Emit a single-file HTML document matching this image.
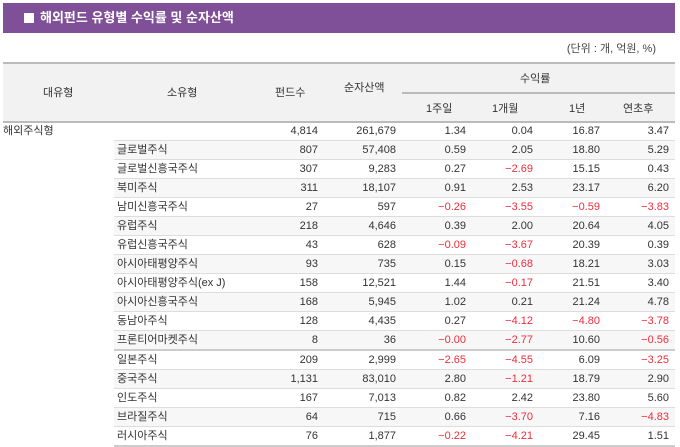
<!DOCTYPE html>
<html><head><meta charset="utf-8"><style>
body{margin:0;width:680px;height:446px;background:#fff;font-family:"Liberation Sans","Noto Sans CJK KR",sans-serif;font-size:11px;color:#333;position:relative;overflow:hidden}
.title{position:absolute;left:3px;top:3px;width:672px;height:30px;background:#7f4f97;color:#fff;font-size:13px;font-weight:bold;line-height:30px}
.title span{display:inline-block;width:10px;height:10px;background:#fff;margin:0 6px 0 21px;vertical-align:-1px}
.unit{position:absolute;right:24px;top:40px;font-size:11px;color:#444}
.hdr{position:absolute;left:3px;top:62px;width:672px;height:57px;background:#f2f2f2;border-top:2px solid #bbb;border-bottom:2px solid #bbb}
.h{position:absolute;font-size:11px}
table{position:absolute;left:3px;top:122px;width:672px;border-collapse:collapse}
td{height:18px;padding:0;line-height:18px;white-space:nowrap}
tr.first td{height:18px}
td.n{text-align:right}
.r{color:#ee2d3b}
tr.g td.s,tr.g td.n{background:#f7f7f7}
tr td.s,tr td.n{border-top:1px solid #ddd}
tr.first td{border-top:none}
tr.thick td{height:17px}
tr.thick td.s,tr.thick td.n{border-top:2px solid #ccc}
tr.last td.s,tr.last td.n{border-bottom:2px solid #ccc}
</style></head><body>
<div class="title"><span></span>해외펀드 유형별 수익률 및 순자산액</div>
<div class="unit">(단위 : 개, 억원, %)</div>
<div class="hdr">
<div class="h" style="left:40px;top:20px">대유형</div>
<div class="h" style="left:164px;top:20px">소유형</div>
<div class="h" style="left:272px;top:20px">펀드수</div>
<div class="h" style="left:341px;top:15px">순자산액</div>
<div class="h" style="left:517px;top:6px">수익률</div>
<div style="position:absolute;left:399px;top:28px;width:273px;height:2px;background:#bbb"></div>
<div class="h" style="left:423px;top:36px">1주일</div>
<div class="h" style="left:489px;top:36px">1개월</div>
<div class="h" style="left:566px;top:36px">1년</div>
<div class="h" style="left:620px;top:36px">연초후</div>
</div>
<table>
<colgroup><col style="width:111px"><col style="width:150px"><col style="width:54px"><col style="width:78px"><col style="width:70px"><col style="width:67px"><col style="width:67px"><col style="width:75px"></colgroup>
<tr class="first"><td>해외주식형</td><td class="s"></td><td class="n">4,814</td><td class="n">261,679</td><td class="n">1.34</td><td class="n">0.04</td><td class="n">16.87</td><td class="n" style="padding-right:6px">3.47</td></tr>
<tr class="g"><td></td><td class="s" style="padding-left:3px">글로벌주식</td><td class="n">807</td><td class="n">57,408</td><td class="n">0.59</td><td class="n">2.05</td><td class="n">18.80</td><td class="n" style="padding-right:6px">5.29</td></tr>
<tr><td></td><td class="s" style="padding-left:3px">글로벌신흥국주식</td><td class="n">307</td><td class="n">9,283</td><td class="n">0.27</td><td class="n r">−2.69</td><td class="n">15.15</td><td class="n" style="padding-right:6px">0.43</td></tr>
<tr class="g"><td></td><td class="s" style="padding-left:3px">북미주식</td><td class="n">311</td><td class="n">18,107</td><td class="n">0.91</td><td class="n">2.53</td><td class="n">23.17</td><td class="n" style="padding-right:6px">6.20</td></tr>
<tr><td></td><td class="s" style="padding-left:3px">남미신흥국주식</td><td class="n">27</td><td class="n">597</td><td class="n r">−0.26</td><td class="n r">−3.55</td><td class="n r">−0.59</td><td class="n r" style="padding-right:6px">−3.83</td></tr>
<tr class="g"><td></td><td class="s" style="padding-left:3px">유럽주식</td><td class="n">218</td><td class="n">4,646</td><td class="n">0.39</td><td class="n">2.00</td><td class="n">20.64</td><td class="n" style="padding-right:6px">4.05</td></tr>
<tr><td></td><td class="s" style="padding-left:3px">유럽신흥국주식</td><td class="n">43</td><td class="n">628</td><td class="n r">−0.09</td><td class="n r">−3.67</td><td class="n">20.39</td><td class="n" style="padding-right:6px">0.39</td></tr>
<tr class="g"><td></td><td class="s" style="padding-left:3px">아시아태평양주식</td><td class="n">93</td><td class="n">735</td><td class="n">0.15</td><td class="n r">−0.68</td><td class="n">18.21</td><td class="n" style="padding-right:6px">3.03</td></tr>
<tr><td></td><td class="s" style="padding-left:3px">아시아태평양주식(ex J)</td><td class="n">158</td><td class="n">12,521</td><td class="n">1.44</td><td class="n r">−0.17</td><td class="n">21.51</td><td class="n" style="padding-right:6px">3.40</td></tr>
<tr class="g"><td></td><td class="s" style="padding-left:3px">아시아신흥국주식</td><td class="n">168</td><td class="n">5,945</td><td class="n">1.02</td><td class="n">0.21</td><td class="n">21.24</td><td class="n" style="padding-right:6px">4.78</td></tr>
<tr><td></td><td class="s" style="padding-left:3px">동남아주식</td><td class="n">128</td><td class="n">4,435</td><td class="n">0.27</td><td class="n r">−4.12</td><td class="n r">−4.80</td><td class="n r" style="padding-right:6px">−3.78</td></tr>
<tr class="g"><td></td><td class="s" style="padding-left:3px">프론티어마켓주식</td><td class="n">8</td><td class="n">36</td><td class="n r">−0.00</td><td class="n r">−2.77</td><td class="n">10.60</td><td class="n r" style="padding-right:6px">−0.56</td></tr>
<tr class="thick"><td></td><td class="s" style="padding-left:3px">일본주식</td><td class="n">209</td><td class="n">2,999</td><td class="n r">−2.65</td><td class="n r">−4.55</td><td class="n">6.09</td><td class="n r" style="padding-right:6px">−3.25</td></tr>
<tr class="g"><td></td><td class="s" style="padding-left:3px">중국주식</td><td class="n">1,131</td><td class="n">83,010</td><td class="n">2.80</td><td class="n r">−1.21</td><td class="n">18.79</td><td class="n" style="padding-right:6px">2.90</td></tr>
<tr><td></td><td class="s" style="padding-left:3px">인도주식</td><td class="n">167</td><td class="n">7,013</td><td class="n">0.82</td><td class="n">2.42</td><td class="n">23.80</td><td class="n" style="padding-right:6px">5.60</td></tr>
<tr class="g"><td></td><td class="s" style="padding-left:3px">브라질주식</td><td class="n">64</td><td class="n">715</td><td class="n">0.66</td><td class="n r">−3.70</td><td class="n">7.16</td><td class="n r" style="padding-right:6px">−4.83</td></tr>
<tr class="last"><td></td><td class="s" style="padding-left:3px">러시아주식</td><td class="n">76</td><td class="n">1,877</td><td class="n r">−0.22</td><td class="n r">−4.21</td><td class="n">29.45</td><td class="n" style="padding-right:6px">1.51</td></tr>
</table>
</body></html>
